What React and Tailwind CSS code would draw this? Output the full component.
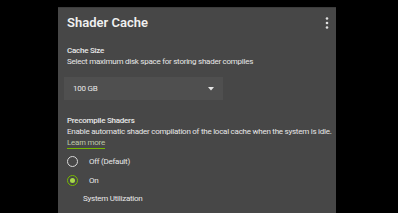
export default function App() {
  const font = { fontFamily: "Roboto, 'Noto Sans', sans-serif" };
  return (
    <div className="w-[398px] h-[213px] bg-black overflow-hidden" style={font}>
      <div className="ml-[58px] pt-[7px]">
        <div className="w-[278px] h-[206px] bg-[#474747] border-t border-[#3c3c3c] overflow-hidden text-[#e8e8e8]">
          <div className="flex items-start justify-between pl-[9px] pr-[3px] pt-[6px]">
            <div className="text-[13px] font-semibold leading-[16px] text-[#f0f0f0] mt-[1px]">Shader Cache</div>
            <svg width="12" height="14" viewBox="0 0 12 14" className="mt-[2px]">
              <circle cx="6" cy="2.5" r="1.3" fill="#e0e0e0" />
              <circle cx="6" cy="7" r="1.3" fill="#e0e0e0" />
              <circle cx="6" cy="11.5" r="1.3" fill="#e0e0e0" />
            </svg>
          </div>
          <div className="pl-[9px] mt-[14px] text-[8px] leading-[11px] tracking-[-0.25px]">
            <div className="font-medium">Cache Size</div>
            <div className="whitespace-nowrap">Select maximum disk space for storing shader compiles</div>
            <div className="-ml-[3px] mt-[10px] w-[159px] h-[23px] bg-[#4f4f4f] flex items-center justify-between pl-[9px] pr-[9px]">
              <span>100 GB</span>
              <svg width="6" height="4" viewBox="0 0 6 4">
                <path d="M0 0 L6 0 L3 3.5 Z" fill="#e6e6e6" />
              </svg>
            </div>
            <div className="font-medium mt-[15px]">Precompile Shaders</div>
            <div className="whitespace-nowrap">Enable automatic shader compilation of the local cache when the system is idle.</div>
            <div className="w-fit text-[#bcc7a8] border-b border-[#76b900]">Learn more</div>
            <div className="flex items-center mt-[6px] h-[12px]">
              <div className="w-[11px] h-[11px] rounded-full border-[1.5px] border-[#d8d8d8]" />
              <span className="ml-[11px]">Off (Default)</span>
            </div>
            <div className="flex items-center mt-[7px] h-[12px]">
              <div className="w-[11px] h-[11px] rounded-full border-[1.5px] border-[#76b900] flex items-center justify-center">
                <div className="w-[5px] h-[5px] rounded-full bg-[#a8d84a]" />
              </div>
              <span className="ml-[11px]">On</span>
            </div>
            <div className="ml-[16px] mt-[7px]">System Utilization</div>
          </div>
        </div>
      </div>
    </div>
  );
}
